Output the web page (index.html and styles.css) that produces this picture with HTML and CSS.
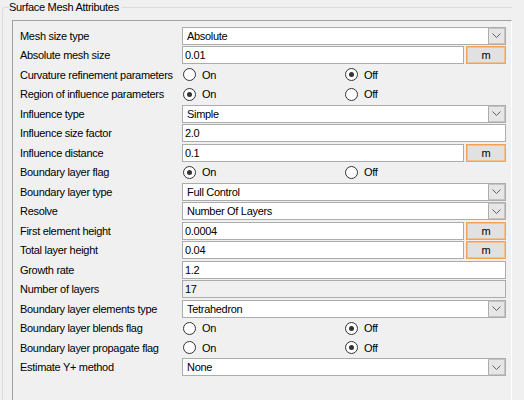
FILE: index.html
```html
<!DOCTYPE html>
<html lang="en">

<head>
    <meta charset="UTF-8">
    <title>Surface Mesh Attributes</title>
    <link rel="stylesheet" href="styles.css">
</head>

<body>
    <fieldset class="group">
        <legend>Surface Mesh Attributes</legend>
        <div class="panel">
            <div class="form">
                <label>Mesh size type</label>
                <div class="combo"><span>Absolute</span><i class="arrow"><svg width="9" height="5" viewBox="0 0 9 5"><polyline points="0.5,0.5 4.5,4.5 8.5,0.5" /></svg></i></div>

                <label>Absolute mesh size</label>
                <div class="unit-row"><div class="field">0.01</div><div class="unit">m</div></div>

                <label>Curvature refinement parameters</label>
                <div class="radios"><span class="radio"><i class="dot"></i>On</span><span class="radio"><i class="dot on"></i>Off</span></div>

                <label>Region of influence parameters</label>
                <div class="radios"><span class="radio"><i class="dot on"></i>On</span><span class="radio"><i class="dot"></i>Off</span></div>

                <label>Influence type</label>
                <div class="combo"><span>Simple</span><i class="arrow"><svg width="9" height="5" viewBox="0 0 9 5"><polyline points="0.5,0.5 4.5,4.5 8.5,0.5" /></svg></i></div>

                <label>Influence size factor</label>
                <div class="field">2.0</div>

                <label>Influence distance</label>
                <div class="unit-row"><div class="field">0.1</div><div class="unit">m</div></div>

                <label>Boundary layer flag</label>
                <div class="radios"><span class="radio"><i class="dot on"></i>On</span><span class="radio"><i class="dot"></i>Off</span></div>

                <label>Boundary layer type</label>
                <div class="combo"><span>Full Control</span><i class="arrow"><svg width="9" height="5" viewBox="0 0 9 5"><polyline points="0.5,0.5 4.5,4.5 8.5,0.5" /></svg></i></div>

                <label>Resolve</label>
                <div class="combo"><span>Number Of Layers</span><i class="arrow"><svg width="9" height="5" viewBox="0 0 9 5"><polyline points="0.5,0.5 4.5,4.5 8.5,0.5" /></svg></i></div>

                <label>First element height</label>
                <div class="unit-row"><div class="field">0.0004</div><div class="unit">m</div></div>

                <label>Total layer height</label>
                <div class="unit-row"><div class="field">0.04</div><div class="unit">m</div></div>

                <label>Growth rate</label>
                <div class="field">1.2</div>

                <label>Number of layers</label>
                <div class="field readonly">17</div>

                <label>Boundary layer elements type</label>
                <div class="combo"><span>Tetrahedron</span><i class="arrow"><svg width="9" height="5" viewBox="0 0 9 5"><polyline points="0.5,0.5 4.5,4.5 8.5,0.5" /></svg></i></div>

                <label>Boundary layer blends flag</label>
                <div class="radios"><span class="radio"><i class="dot"></i>On</span><span class="radio"><i class="dot on"></i>Off</span></div>

                <label>Boundary layer propagate flag</label>
                <div class="radios"><span class="radio"><i class="dot"></i>On</span><span class="radio"><i class="dot on"></i>Off</span></div>

                <label>Estimate Y+ method</label>
                <div class="combo"><span>None</span><i class="arrow"><svg width="9" height="5" viewBox="0 0 9 5"><polyline points="0.5,0.5 4.5,4.5 8.5,0.5" /></svg></i></div>
            </div>
        </div>
    </fieldset>
</body>

</html>
```

FILE: styles.css
```css
* {
    box-sizing: border-box;
}

body {
    margin: 0;
    height: 400px;
    overflow: hidden;
    background-color: #f0f0f0;
    font-family: "Liberation Sans", Arial, sans-serif;
    font-size: 11px;
    letter-spacing: -0.3px;
    color: #000;
}

.group {
    margin: 0 0 0 2px;
    padding: 0 0 0 6px;
    width: 510px;
    min-width: 0;
    border: 1px solid #dcdcdc;
    border-right: 0;
    border-bottom: 0;
    border-top-left-radius: 3px;
}

.group legend {
    padding: 0 2px 0 0;
    line-height: 15px;
}

.panel {
    margin: 5px 0 0 3px;
    width: 500px;
    height: 390px;
    border-top: 1px solid #a0a0a0;
    border-left: 1px solid #a0a0a0;
    border-right: 1px solid #fff;
    padding: 5px 0 0 7px;
}

.form {
    display: grid;
    grid-template-columns: 162px 324px;
    grid-auto-rows: 19.5px;
    align-items: center;
}

.form label {
    white-space: nowrap;
}

.field {
    height: 18px;
    border: 1px solid #acacac;
    background-color: #fff;
    padding: 0 2px;
    line-height: 16px;
}

.field.readonly {
    background-color: #f0f0f0;
}

.combo {
    display: flex;
    height: 18px;
    border: 1px solid #acacac;
    background-color: #fff;
}

.combo span {
    flex: 1;
    padding-left: 4px;
    line-height: 16px;
}

.combo .arrow {
    width: 17px;
    background-color: #e6e6e6;
    border: 1px solid #c4c4c4;
    border-left-color: #acacac;
    display: flex;
    align-items: center;
    justify-content: center;
}

.arrow polyline {
    fill: none;
    stroke: #606060;
    stroke-width: 1;
}

.unit-row {
    display: flex;
}

.unit-row .field {
    width: 282px;
}

.unit {
    margin-left: 2px;
    width: 40px;
    height: 18px;
    border: 1px solid #f3a152;
    box-shadow: inset 0 0 0 1px #f4c08e;
    background-color: #e1e1e1;
    text-align: center;
    line-height: 16px;
}

.radios {
    display: flex;
}

.radio {
    width: 162px;
    display: flex;
    align-items: center;
    gap: 6px;
    padding-left: 1px;
}

.dot {
    width: 13px;
    height: 13px;
    border: 1px solid #333;
    border-radius: 50%;
    background-color: #fff;
    display: flex;
    align-items: center;
    justify-content: center;
}

.dot.on::after {
    content: "";
    width: 5px;
    height: 5px;
    border-radius: 50%;
    background-color: #333;
}
```
